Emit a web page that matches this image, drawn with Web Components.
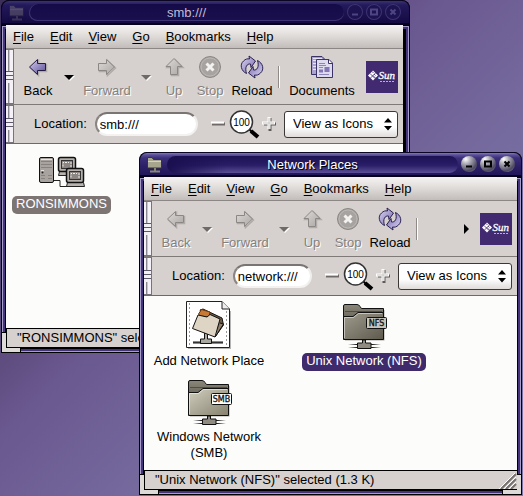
<!DOCTYPE html>
<html lang="en">
<head>
<meta charset="utf-8">
<title>Network Places</title>
<style>
html, body { height: 100%; margin: 0; }
body {
  font: 13px/16px "Liberation Sans", Arial, sans-serif;
  color: #000;
  overflow: hidden;
}
</style>
</head>
<body>
<desk-top>
  <desk-window class="back" caption="smb:///" faded>
    <menu-bar></menu-bar>
    <tool-bar>
      <tool-button icon="left" label="Back" size="s"></tool-button>
      <tool-history label="Back history"></tool-history>
      <tool-button icon="right" label="Forward" size="l" disabled></tool-button>
      <tool-history label="Forward history" disabled></tool-history>
      <tool-button icon="up" label="Up" size="xs" disabled></tool-button>
      <tool-button icon="stop" label="Stop" size="s" disabled></tool-button>
      <tool-button icon="reload" label="Reload" size="m"></tool-button>
      <tool-line></tool-line>
      <tool-button icon="docs" label="Documents" size="xl"></tool-button>
    </tool-bar>
    <location-bar value="smb:///"></location-bar>
    <icon-view columns="narrow">
      <icon-item icon="hosts" selected="grey">RONSIMMONS</icon-item>
    </icon-view>
    <status-bar>"RONSIMMONS" selected</status-bar>
  </desk-window>
  <desk-window class="front" caption="Network Places">
    <menu-bar></menu-bar>
    <tool-bar overflow>
      <tool-button icon="left" label="Back" size="s" disabled></tool-button>
      <tool-history label="Back history" disabled></tool-history>
      <tool-button icon="right" label="Forward" size="l" disabled></tool-button>
      <tool-history label="Forward history" disabled></tool-history>
      <tool-button icon="up" label="Up" size="xs" disabled></tool-button>
      <tool-button icon="stop" label="Stop" size="s" disabled></tool-button>
      <tool-button icon="reload" label="Reload" size="m"></tool-button>
      <tool-line></tool-line>
    </tool-bar>
    <location-bar value="network:///"></location-bar>
    <icon-view>
      <icon-item icon="add">Add Network Place</icon-item>
      <icon-item icon="nfs" selected="purple">Unix Network (NFS)</icon-item>
      <icon-item icon="smb">Windows Network<br>(SMB)</icon-item>
    </icon-view>
    <status-bar grip>"Unix Network (NFS)" selected (1.3 K)</status-bar>
  </desk-window>
</desk-top>

<script>
const arrow = (d, off) => `<svg width="24" height="24" viewBox="0 0 24 24">
  <defs><linearGradient id="a" x1="0" y1="0" x2="1" y2="1"><stop offset="0" stop-color="${off ? '#dedad7' : '#d4cef0'}"/><stop offset="1" stop-color="${off ? '#aaa6a3' : '#5b4c93'}"/></linearGradient></defs>
  <path d="${d}" transform="translate(1 1)" fill="none" stroke="#b0aba8" stroke-width="1.5"/>
  <path d="${d}" fill="url(#a)" stroke="${off ? '#8b8784' : '#241b45'}"/></svg>`;

const folder = (tag, dark) => `<svg width="48" height="48" viewBox="0 0 48 48">
  <defs>
    <linearGradient id="f" x1="0" y1="0" x2="1" y2="1"><stop offset="0" stop-color="${dark ? '#a09c8e' : '#d2cebf'}"/><stop offset="1" stop-color="${dark ? '#5d594c' : '#86826f'}"/></linearGradient>
    <linearGradient id="b" x1="0" y1="0" x2="0" y2="1"><stop offset="0" stop-color="#8b877a"/><stop offset="1" stop-color="#3c3a32"/></linearGradient>
    <linearGradient id="w" x1="0" x2="1"><stop offset="0" stop-color="#222" stop-opacity="0"/><stop offset=".25" stop-color="#222"/><stop offset=".75" stop-color="#222"/><stop offset="1" stop-color="#222" stop-opacity="0"/></linearGradient>
  </defs>
  <path d="M43.500 9V38.500H5" fill="none" stroke="#aaa" stroke-width="2"/>
  <path d="M3.500 37V5Q3.500 3.500 5 3.500H17Q19 3.500 20 5.500L21.500 7.500H43.500V37Z" fill="url(#b)" stroke="#111"/>
  <path d="M5 10.500H42" stroke="#111" stroke-opacity=".4"/>
  <path d="M3.500 38.500V15.500H13L18 11.500H43.500V38.500Z" fill="url(#f)" stroke="#111"/>
  <path d="M4.500 37V16.500H13.500L18.500 12.500H42" fill="none" stroke="#fff" stroke-opacity=".5"/>
  <rect x="8" y="43" width="33" height="1" fill="url(#w)"/><rect x="8" y="46" width="33" height="1" fill="url(#w)"/>
  <path d="M22.500 39h3v3h5.500v5.500H17.500V42h5z" fill="#8f8b80" stroke="#111"/>
  <rect x="26.500" y="16.500" width="20" height="11" rx="1" fill="${dark ? '#c8c4bb' : '#fff'}" stroke="#111"/>
  <text x="36.500" y="25" text-anchor="middle" font-family="DejaVu Sans, sans-serif" font-size="8" fill="#111" stroke="#111" stroke-width=".3">${tag}</text></svg>`;

const monitor = (x, y) => `<g transform="translate(${x} ${y})">
  <path d="M1.500 14.500H17.500L18.500 18.500H.500Z" fill="#b8b3ae" stroke="#222"/>
  <rect x=".500" y=".500" width="17" height="14" rx="2" fill="#b5b0ab" stroke="#111" stroke-width="1.500"/>
  <rect x="3.500" y="3.500" width="11" height="8" fill="#8b8681" stroke="#333"/>
  <path d="M5 9.500V5.500H11M13 10V5" fill="none" stroke="#eee" stroke-dasharray="2 1"/></g>`;

const ICONS = {
  left: off => arrow('M3.500 12L11.500 4.500V8.500H19.500V15.500H11.500V19.500Z', off),
  right: off => arrow('M19.500 12L11.500 4.500V8.500H3.500V15.500H11.500V19.500Z', off),
  up: off => arrow('M12 3.500L20 11.500H15.500V19.500H8.500V11.500H4Z', off),
  stop: () => `<svg width="24" height="24" viewBox="0 0 24 24"><circle cx="12" cy="12" r="10.500" fill="#a7a3a0" stroke="#8a8683"/><circle cx="12" cy="12" r="9" fill="none" stroke="#bcb8b5"/><path d="M8.500 8.500l7 7M15.500 8.500l-7 7" stroke="#f4f2f0" stroke-width="3"/></svg>`,
  reload: () => {
    const half = 'M6.500 18.500C1 16 -.500 9.500 3.500 6C5.500 4 7.500 3.500 9.500 4L9 1L15.500 6L11 12.500L10.500 9C7 8.500 4.500 12 6.500 18.500Z';
    return `<svg width="24" height="24" viewBox="0 0 24 24">
    <defs><linearGradient id="r" x1="0" y1="0" x2="1" y2="1"><stop offset="0" stop-color="#dcd8f4"/><stop offset="1" stop-color="#7263a8"/></linearGradient></defs>
    <g fill="url(#r)" stroke="#2a2050" stroke-linejoin="round"><path d="${half}"/><path d="${half}" transform="rotate(180 12 12)"/></g></svg>`;
  },
  docs: () => `<svg width="24" height="24" viewBox="0 0 24 24">
    <path d="M1.500 1.500H12L15.500 5V19.500H1.500Z" fill="#aaa2cf" stroke="#3b3268"/>
    <path d="M3 3.500h9M3 5.500h3M3 8.500h3M3 11.500h3M3 14.500h3" stroke="#e8e5f6"/>
    <path d="M6.500 4.500H19L22.500 8V22.500H6.500Z" fill="#dedbee" stroke="#3b3268"/>
    <path d="M18.500 5V8.500H22" fill="#fff" stroke="#3b3268"/>
    <path d="M9 8.500h6M9 10.500h7M9 12.500h4M9 19.500h10" stroke="#8d84b8"/>
    <path d="M14.500 12h5v5h-5zM9 14.500h4v3H9z" fill="#8277b4"/></svg>`,
  smb: () => folder('SMB', false),
  nfs: () => folder('NFS', true),
  add: () => `<svg width="48" height="48" viewBox="0 0 48 48">
    <path d="M45 10V48H3" fill="none" stroke="#b5b5b5" stroke-width="2"/>
    <path d="M1.500 .500H37L44.500 8V46.500H1.500Z" fill="#fff" stroke="#222"/>
    <path d="M4.500 2V45M41.500 10V45" stroke="#999" stroke-dasharray="2 2"/>
    <path d="M37 .500V8H44.500" fill="#eee" stroke="#222"/>
    <path d="M8 41.500H38" stroke="#888" stroke-width="3"/>
    <path d="M8 41.500H38" stroke="#333"/>
    <path d="M19.500 30v8h-4v4.500h11V38h-4v-8" fill="#aaa6a0" stroke="#111"/>
    <path d="M15 9L18 8L37 17L38.500 24L30 36Z" fill="#6d5c48" stroke="#111"/>
    <path d="M13.500 13L16.500 8.500L25 11L24 16L15 15Z" fill="#c87a34" stroke="#6b3510"/>
    <path d="M13 14L22 16L25 13.500L35 18L30 36L7.500 27.500Z" fill="#ded5c4" stroke="#111"/>
    <path d="M35 22L38.500 23L30.500 35.500" fill="#91826d" stroke="#111"/></svg>`,
  hosts: () => `<svg width="48" height="36" viewBox="0 0 48 36">
    <path d="M16 24.500h6v6h8" fill="none" stroke="#222"/>
    <rect x="1.500" y="1.500" width="14" height="25" rx="1.500" fill="#a8a39e" stroke="#111"/>
    <path d="M3 5.500h11M3 8.500h11M3 11.500h11M3 22.500h4M3 19.500h4M10 22.500h4M10 19.500h4" stroke="#87827d"/>
    <path d="M3 3.500h11M3 14.500h3" stroke="#e8e5e2"/>
    <circle cx="4.500" cy="16.500" r="1" fill="#222"/>
    ${monitor(20, 1)}
    ${monitor(28, 12)}
    </svg>`,
  place: () => `<svg width="18" height="18" viewBox="0 0 18 18"><path d="M1.500 13V2.500H6L7.500 4.500H15.500V13Z" fill="#a8a58e" stroke="#37352c"/><path d="M2 6.500H15" stroke="#d4d1be"/><path d="M9 13v3M4 16.500h10" stroke="#888676" stroke-width="2"/></svg>`
};

function define(name, css, html) {
  customElements.define(name, class extends HTMLElement {
    constructor() {
      super();
      this.attachShadow({ mode: 'open' });
    }
    connectedCallback() {
      if (this.shadowRoot.firstChild) return;
      const base = `*{box-sizing:border-box} svg{display:block} button,input,select{font:inherit;color:inherit;margin:0;padding:0;border:0;background:none}`;
      this.shadowRoot.innerHTML = `<style>${base}${css}</style>${html(this)}`;
    }
  });
}

define('desk-top', `
  :host{display:block;position:relative;height:100vh;overflow:hidden;background:linear-gradient(135deg,#3a2e58,#5f4d80 36%,#6a5890 43%,#766b9e 63%,#8076a8)}
  ::slotted(.back){position:absolute;inset:0 113px 143px 1px}
  ::slotted(.front){position:absolute;inset:152px 1px 1px 139px}
`, () => `<slot></slot>`);

const glyphs = { Minimize: 'M5 10.500h6', Maximize: 'M5 5.500h6v5h-6z', Close: 'M5.500 5.500l5 5M10.500 5.500l-5 5' };
define('desk-window', `
  :host{display:flex;flex-direction:column;border-radius:8px 8px 0 0;background:#000;overflow:hidden}
  header{display:flex;align-items:center;gap:3px;height:25px;flex:none;padding:0 6px;border:1px solid #0a0624;border-bottom:2px solid #05021a;border-radius:8px 8px 0 0;
    background:linear-gradient(#8279b8 0,#5a4e98 2px,#3b2f7a 5px,#2c2067 60%,#21165a)}
  header .place{width:18px}
  h1{flex:1;height:17px;margin:0;font:inherit;line-height:17px;text-align:center;color:#fff;text-shadow:1px 1px #000;white-space:nowrap;
    border-radius:9px;background:linear-gradient(90deg,#1a1050,#1a105000 60px),linear-gradient(#1c1252,#2a1e68 55%,#5a5096)}
  button{width:16px;height:16px;border-radius:50%;background:radial-gradient(circle at 30% 20%,#fff,#a8a6b2 30%,#4c4860 70%,#8a8698);color:#000}
  :host([faded]) header{padding-right:8px;background:linear-gradient(#3a3270 0,#231a5c 4px,#1d1350 50%,#150b42)}
  :host([faded]) .place{opacity:.3}
  :host([faded]) h1{color:#c0bcd4;text-shadow:none;background:linear-gradient(#150b48,#1b104e);box-shadow:inset 0 -1px #3d3474,inset 1px 0 #3d3474}
  :host([faded]) button{background:#1d1350;color:#4e4585;box-shadow:inset 0 0 0 1px #3d3474}
  .frame{flex:1;min-height:0;display:flex;flex-direction:column;padding:0 5px 5px;position:relative;
    background:#000;box-shadow:inset 0 0 0 1px #000,inset 0 0 0 2px #a79dcb,inset 0 0 0 4px #45337c}
  :host([faded]) .frame{padding-right:7px}
  .corner{position:absolute;bottom:0;width:20px;height:21px;background:#000}
  .corner::before{content:"";position:absolute;inset:1px;background:#dedad8}
  .bl{left:0;clip-path:polygon(0 0,5px 0,5px 16px,100% 16px,100% 100%,0 100%)}
  .br{right:0;clip-path:polygon(100% 0,calc(100% - 5px) 0,calc(100% - 5px) 16px,0 16px,0 100%,100% 100%)}
`, el => `<header><span class="place">${ICONS.place()}</span><h1>${el.getAttribute('caption')}</h1>
  ${Object.entries(glyphs).map(([n, d]) => `<button aria-label="${n}"><svg width="16" height="16" viewBox="0 0 16 16"><path d="${d}" fill="none" stroke="currentColor" stroke-width="2"/></svg></button>`).join('')}</header>
  <div class="frame"><slot></slot><span class="corner bl"></span><span class="corner br"></span></div>`);

define('menu-bar', `
  :host{display:block;flex:none}
  nav{display:flex;gap:16px;height:24px;padding:0 7px;border-bottom:1px solid #8c8784;background:linear-gradient(#f6f4f3,#dedad8 50%,#c2bdba)}
  button{white-space:nowrap}
  u{text-underline-offset:2px}
`, () => `<nav>${['File', 'Edit', 'View', 'Go', 'Bookmarks', 'Help'].map(t => `<button><u>${t[0]}</u>${t.slice(1)}</button>`).join('')}</nav>`);

define('grip-handle', `
  :host{display:block;flex:none;width:8px;align-self:stretch;border:1px solid #77737a;border-width:1px 1px 1px 0;
    background:linear-gradient(90deg,#f4f2f6 2px,#8a8692 2px 3px,#c9c5d0 3px 4px,#f4f2f6 4px)}
  div{height:100%;display:flex;align-items:center}
  span{flex:1;height:12px;background:repeating-linear-gradient(#5d5968 0 1px,#f2f0f4 1px 4px)}
`, () => `<div><span></span></div>`);

define('tool-bar', `
  :host{display:block;flex:none}
  div{display:flex;height:56px;padding-right:5px;align-items:center;border-bottom:1px solid #7f7a77;background:#d6d1ce}
  slot{display:contents}
  grip-handle{margin-right:5px}
  .more{margin-left:auto;width:12px;height:20px}
  .sun{margin-left:auto;width:32px;height:32px;flex:none}
  .more + .sun{margin-left:8px}
`, el => `<div><grip-handle></grip-handle><slot></slot>
  ${el.hasAttribute('overflow') ? '<button class="more" aria-label="More tools"><svg width="12" height="20" viewBox="0 0 12 20"><path d="M4 5V15L9 10Z"/></svg></button>' : ''}
  <svg class="sun" viewBox="0 0 32 32"><rect width="32" height="32" fill="#412a70"/>
  <path d="M7 9.500L12 14.500L7 19.500L2 14.500Z" fill="#fff"/>
  <path d="M4 12.500l5 5M6 10.500l1.500 1.500M8 13l1.500 1.500M9.500 12l-5 5M7 14.500l2.500 2.500" stroke="#412a70" stroke-width=".8"/>
  <text x="12.500" y="18" font-family="Liberation Serif, serif" font-style="italic" font-size="11" fill="#fff" stroke="#fff" stroke-width=".3">Sun</text>
  <path d="M14 20.500h15" stroke="#b9aedb" stroke-dasharray="2 1"/></svg></div>`);

define('tool-button', `
  :host{display:block;flex:none;width:38px}
  :host([size=xs]){width:34px} :host([size=m]){width:46px} :host([size=l]){width:54px} :host([size=xl]){width:76px}
  button{display:flex;flex-direction:column;align-items:center;gap:4px;width:100%;white-space:nowrap}
  button:disabled{color:#85807d;text-shadow:1px 1px #fff}
`, el => {
  const off = el.hasAttribute('disabled');
  return `<button ${off ? 'disabled' : ''}>${ICONS[el.getAttribute('icon')](off)}<span>${el.getAttribute('label')}</span></button>`;
});

define('tool-history', `
  :host{display:block;flex:none;width:23px}
  button{display:block;width:100%;height:20px;color:#000}
  button:disabled{color:#6f6a67}
  svg{margin:0 auto}
`, el => `<button aria-label="${el.getAttribute('label')}" ${el.hasAttribute('disabled') ? 'disabled' : ''}><svg width="12" height="20" viewBox="0 0 12 20"><path d="M2 9H12L7 14Z" fill="#fff"/><path d="M1 8H11L6 13Z" fill="currentColor"/></svg></button>`);

define('tool-line', `
  :host{display:block;flex:none;width:2px;height:22px;margin:0 4px 0 3px;background:linear-gradient(90deg,#8f8a87 50%,#fff 50%)}
`, () => '');

define('location-bar', `
  :host{display:block;flex:none}
  form{display:flex;align-items:center;height:39px;margin:0;padding-right:5px;border-bottom:1px solid #6f6a68;background:#d6d1ce}
  label{margin:0 8px 0 20px}
  input{flex:1;min-width:0;height:24px;padding:0 3px;border:2px solid;border-color:#7a7572 #f0eeec #f4f2f0 #8a8582;border-radius:12px;background:#fff;outline:0}
  .out{margin-left:13px}
  .zoom{width:14px;height:24px}
  .full{width:32px;height:32px;margin:0 1px 0 4px}
  .pick{position:relative;margin-left:8px}
  select{appearance:none;width:114px;height:27px;padding:0 8px;border:1px solid #3c3836;border-radius:3px;background:linear-gradient(#fff 60%,#dfdcda);white-space:nowrap}
  .pick svg{position:absolute;right:6px;top:6px;pointer-events:none}
`, el => `<form><grip-handle></grip-handle><label for="loc">Location:</label><input id="loc" value="${el.getAttribute('value')}">
  <button type="button" class="zoom out" aria-label="Zoom out"><svg width="14" height="24" viewBox="0 0 14 24"><path d="M1 12h13" stroke="#6f6a67" stroke-width="3"/><path d="M0 10.500h13" stroke="#fff" stroke-width="2"/><path d="M1 11.500h12" stroke="#c8c3c0"/></svg></button>
  <button type="button" class="full"><svg width="32" height="32" viewBox="0 0 32 32"><path d="M20 21l3 3" stroke="#000" stroke-width="2"/><path d="M22 23l7 6" stroke="#000" stroke-width="4"/><circle cx="12.500" cy="14" r="11" fill="#fff" stroke="#333" stroke-width="1.500"/><text x="12.500" y="18" text-anchor="middle" font-family="Liberation Sans, sans-serif" font-size="10">100</text></svg></button>
  <button type="button" class="zoom" aria-label="Zoom in"><svg width="14" height="24" viewBox="0 0 14 24"><path d="M8 6v13M2 12h12" stroke="#5f5a57" stroke-width="3"/><path d="M7 5v12M0 11h13" stroke="#fff" stroke-width="3"/><path d="M7 6v11M1 11h11" stroke="#c9c4c1"/></svg></button>
  <span class="pick"><select aria-label="View as"><option>View as Icons</option></select><svg width="8" height="15" viewBox="0 0 8 15"><path d="M0 5.500L4 1L8 5.500ZM0 9L4 13.500L8 9Z"/></svg></span></form>`);

define('icon-view', `
  :host{display:block;flex:1;min-height:0;background:#fcfdfb}
  div{display:grid;grid-template-columns:130px 130px;gap:6px 25px;padding-top:5px}
  :host([columns=narrow]) div{grid-template-columns:111px;padding-top:12px}
`, () => `<div><slot></slot></div>`);

define('icon-item', `
  :host{display:flex;flex-direction:column;align-items:center;gap:4px;text-align:center}
  span{padding:0 4px 2px;line-height:16px;border-radius:5px;white-space:nowrap}
  :host([selected]) span{color:#fff}
  :host([selected=grey]) span{background:#7d7474}
  :host([selected=purple]) span{background:#3f2a6c}
`, el => `${ICONS[el.getAttribute('icon')]()}<span><slot></slot></span>`);

define('status-bar', `
  :host{display:block;flex:none}
  div{display:flex;justify-content:space-between;align-items:flex-end;height:20px;line-height:18px;padding-left:10px;border:solid #000;border-width:1px 0 1px 1px;background:#d6d1ce;white-space:nowrap;overflow:hidden}
`, el => `<div><slot></slot>${el.hasAttribute('grip') ? '<svg width="18" height="16" viewBox="0 0 18 16"><path d="M2 16L17 1M7 16L17 6M12 16L17 11" stroke="#77726f" stroke-width="2"/><path d="M0 16L16 0M5 16L17 4M10 16L17 9" stroke="#fff"/></svg>' : ''}</div>`);
</script>
</body>
</html>
